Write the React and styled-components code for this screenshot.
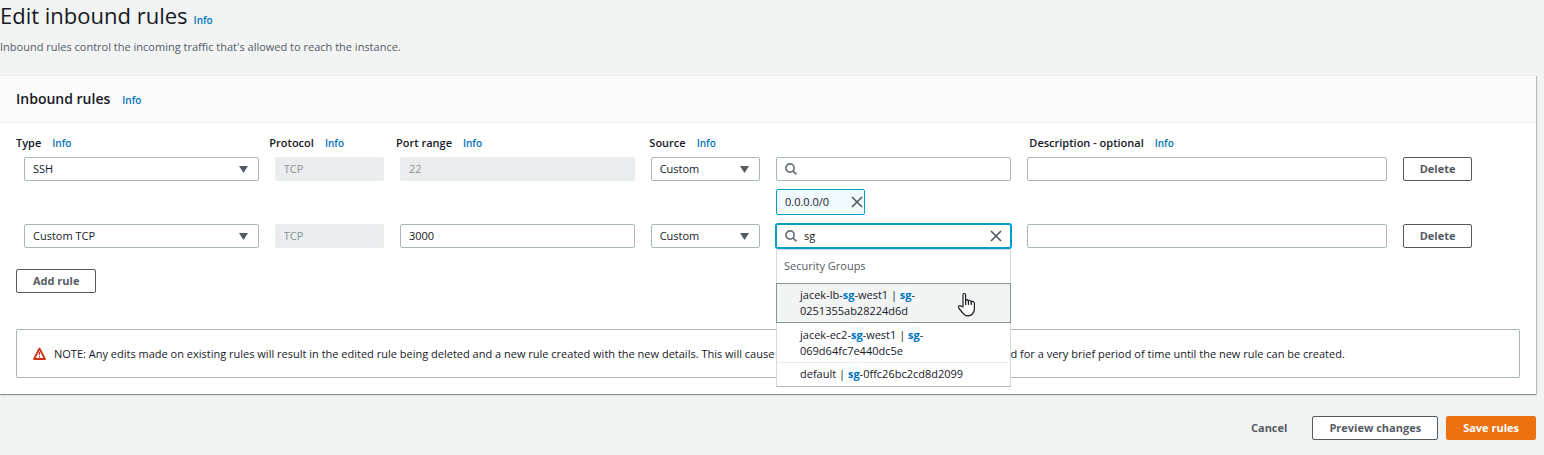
import React, { useState } from 'react';
import styled, { createGlobalStyle, css } from 'styled-components';

const GlobalStyle = createGlobalStyle`
  *, *::before, *::after { box-sizing: border-box; }
  body {
    margin: 0;
    background: #f2f3f3;
    color: #16191f;
    font-family: "Open Sans", "Noto Sans", sans-serif;
    font-size: 11px;
    line-height: 16px;
  }
  button, input, select { font: inherit; color: inherit; margin: 0; }
`;

const Page = styled.main`
  padding-right: 8px;
`;

const PageHeader = styled.header`
  padding-bottom: 20px;
`;

const TitleLine = styled.div`
  display: flex;
  align-items: baseline;
  gap: 6px;
`;

const PageTitle = styled.h1`
  margin: 0;
  font-size: 22px;
  line-height: 30px;
  font-weight: 400;
`;

const Intro = styled.p`
  margin: 9px 0 0;
  color: #545b64;
`;

const InfoLink = styled.a`
  color: #0073bb;
  font-size: 10px;
  font-weight: 600;
  text-decoration: none;
`;

const Panel = styled.section`
  background: #fff;
  border-top: 1px solid #eaeded;
  box-shadow: 0 1px 1px 0 rgba(0, 28, 36, 0.3), 1px 1px 1px 0 rgba(0, 28, 36, 0.2);
`;

const PanelHeader = styled.div`
  display: flex;
  align-items: baseline;
  gap: 12px;
  padding: 12px 16px;
  background: #fafafa;
  border-bottom: 1px solid #eaeded;
`;

const PanelTitle = styled.h2`
  margin: 0;
  font-size: 14px;
  line-height: 22px;
  font-weight: 600;
`;

const PanelBody = styled.div`
  padding: 12px 0 16px;
`;

const ColumnHeads = styled.div`
  display: grid;
  grid-template-columns: repeat(12, 1fr);
  padding-left: 16px;
  margin-bottom: 6px;
`;

const ColumnHead = styled.div`
  grid-column: span ${(p) => p.$span};
  display: flex;
  align-items: baseline;
  gap: 11px;
  font-weight: 600;
`;

const Rules = styled.div`
  display: flex;
  flex-direction: column;
  gap: 9px;
`;

const RuleRow = styled.div`
  display: grid;
  grid-template-columns: repeat(12, 1fr);
  column-gap: 16px;
  align-items: start;
  padding: 0 24px;
`;

const Cell = styled.div`
  grid-column: span ${(p) => p.$span};
  position: relative;
  min-width: 0;
`;

const controlBox = css`
  display: block;
  width: 100%;
  height: 24px;
  padding: 0 8px;
  border: 1px solid #aab7b8;
  border-radius: 2px;
  background: #fff;
  outline: none;
`;

const TextInput = styled.input`
  ${controlBox}
  padding-bottom: 2px;
  &:disabled {
    background: #eaeded;
    border-color: #eaeded;
    color: #879596;
  }
`;

const SelectInput = styled.select`
  ${controlBox}
  appearance: none;
`;

const Caret = styled.svg`
  position: absolute;
  top: 9px;
  right: 11px;
  width: 9px;
  height: 7px;
  fill: #545b64;
  pointer-events: none;
`;

const SearchBox = styled.div`
  display: flex;
  align-items: center;
  gap: 7px;
  height: 24px;
  padding: 0 8px;
  border: 1px solid ${(p) => (p.$active ? '#00a1c9' : '#aab7b8')};
  border-radius: 2px;
  background: #fff;
  box-shadow: ${(p) => (p.$active ? '0 0 0 1px #00a1c9' : 'none')};
`;

const SearchInput = styled.input`
  flex: 1;
  min-width: 0;
  height: 20px;
  padding: 0 0 2px;
  border: 0;
  outline: 0;
  background: transparent;
`;

const LineIcon = styled.svg`
  flex: none;
  display: block;
  width: 12px;
  height: 12px;
  fill: none;
  stroke: ${(p) => p.$color || '#545b64'};
  stroke-width: 1.700;
`;

const IconButton = styled.button`
  display: flex;
  padding: 0;
  border: 0;
  background: transparent;
  cursor: pointer;
`;

const Token = styled.div`
  display: inline-flex;
  vertical-align: top;
  align-items: center;
  gap: 22px;
  height: 26px;
  margin-top: 8px;
  padding: 0 1px 0 8px;
  border: 1px solid #00a1c9;
  border-radius: 2px;
  background: #f1faff;
`;

const Menu = styled.div`
  position: absolute;
  z-index: 2;
  top: 25px;
  left: 0;
  right: 0;
  background: #fff;
  border: 1px solid #d5dbdb;
  border-bottom-color: #aab7b8;
`;

const MenuHeading = styled.div`
  padding: 8px 7px 9px;
  color: #545b64;
`;

const MenuOption = styled.div`
  position: relative;
  padding: ${(p) => (p.$last ? '2px 8px 3px 23px' : '3px 72px 3px 23px')};
  margin: 0 -1px;
  border: 1px solid ${(p) => (p.$hovered ? '#879596' : 'transparent')};
  border-bottom-color: ${(p) => (p.$hovered ? '#879596' : p.$last ? 'transparent' : '#eaeded')};
  background: ${(p) => (p.$hovered ? '#f2f3f3' : 'transparent')};
  white-space: ${(p) => (p.$last ? 'nowrap' : 'normal')};
`;

const Match = styled.mark`
  background: #f1faff;
  color: #0073bb;
  font-weight: 700;
`;

const HandPointer = styled.svg`
  position: absolute;
  top: 8px;
  right: 34px;
  width: 19px;
  height: 25px;
`;

const Button = styled.button`
  height: 24px;
  padding: 0 16px;
  border: 1px solid ${(p) => (p.$kind === 'primary' ? '#ec7211' : p.$kind === 'link' ? 'transparent' : '#545b64')};
  border-radius: 2px;
  background: ${(p) => (p.$kind === 'primary' ? '#ec7211' : p.$kind === 'link' ? 'transparent' : '#fff')};
  color: ${(p) => (p.$kind === 'primary' ? '#fff' : '#545b64')};
  font-weight: 700;
  white-space: nowrap;
  cursor: pointer;
`;

const AddBar = styled.div`
  padding: 21px 16px 36px;
`;

const Note = styled.div`
  display: flex;
  align-items: center;
  gap: 8px;
  margin: 0 16px;
  padding: 16px;
  border: 1px solid #aab7b8;
  border-radius: 2px;
  line-height: 15px;
`;

const WarningIcon = styled.svg`
  flex: none;
  width: 13px;
  height: 13px;
  fill: none;
  stroke: #d13212;
  stroke-width: 1.800;
`;

const Actions = styled.footer`
  display: flex;
  justify-content: flex-end;
  gap: 8px;
  padding: 22px 0 15px;
`;

function Info() {
  return <InfoLink href="#info">Info</InfoLink>;
}

function Select({ label, options }) {
  return (
    <>
      <SelectInput aria-label={label} defaultValue={options[0]}>
        {options.map((o) => <option key={o}>{o}</option>)}
      </SelectInput>
      <Caret viewBox="0 0 9 7" aria-hidden="true"><path d="M0 0h9L4.500 7z" /></Caret>
    </>
  );
}

function SearchIcon() {
  return (
    <LineIcon viewBox="0 0 12 12" $color="#687078" aria-hidden="true">
      <circle cx="5" cy="5" r="4.100" />
      <path d="M7.900 7.900L11.400 11.400" />
    </LineIcon>
  );
}

function Clear({ label, onClick }) {
  return (
    <IconButton type="button" aria-label={label} onClick={onClick}>
      <LineIcon viewBox="0 0 12 12"><path d="M1 1l10 10M11 1L1 11" /></LineIcon>
    </IconButton>
  );
}

function Highlighted({ text }) {
  return text.split(/(sg)(-)/).map((part, i) => (
    part === 'sg' ? <Match key={i}>sg</Match> : <React.Fragment key={i}>{part}</React.Fragment>
  ));
}

const columns = [
  ['Type', 2],
  ['Protocol', 1],
  ['Port range', 2],
  ['Source', 3],
  ['Description - optional', 4],
];

const groups = [
  'jacek-lb-sg-west1 | sg-0251355ab28224d6d',
  'jacek-ec2-sg-west1 | sg-069d64fc7e440dc5e',
  'default | sg-0ffc26bc2cd8d2099',
];

function Rule({ name, types, port, portLocked, search, children }) {
  const [query, setQuery] = useState(search);
  return (
    <RuleRow>
      <Cell $span={2}><Select label={`${name} type`} options={types} /></Cell>
      <Cell $span={1}><TextInput aria-label={`${name} protocol`} defaultValue="TCP" disabled /></Cell>
      <Cell $span={2}><TextInput aria-label={`${name} port range`} defaultValue={port} disabled={portLocked} /></Cell>
      <Cell $span={1}><Select label={`${name} source`} options={['Custom', 'Anywhere', 'My IP']} /></Cell>
      <Cell $span={2}>
        <SearchBox $active={query !== ''}>
          <SearchIcon />
          <SearchInput aria-label={`${name} source search`} value={query} onChange={(e) => setQuery(e.target.value)} />
          {query !== '' && <Clear label="Clear search" onClick={() => setQuery('')} />}
        </SearchBox>
        {children}
      </Cell>
      <Cell $span={3}><TextInput aria-label={`${name} description`} /></Cell>
      <Cell $span={1}><Button type="button">Delete</Button></Cell>
    </RuleRow>
  );
}

export default function App() {
  return (
    <Page>
      <GlobalStyle />
      <PageHeader>
        <TitleLine>
          <PageTitle>Edit inbound rules</PageTitle>
          <Info />
        </TitleLine>
        <Intro>Inbound rules control the incoming traffic that's allowed to reach the instance.</Intro>
      </PageHeader>

      <Panel>
        <PanelHeader>
          <PanelTitle>Inbound rules</PanelTitle>
          <Info />
        </PanelHeader>
        <PanelBody>
          <ColumnHeads>
            {columns.map(([title, span]) => (
              <ColumnHead key={title} $span={span}>{title}<Info /></ColumnHead>
            ))}
          </ColumnHeads>
          <Rules>
            <Rule name="Rule 1" types={['SSH', 'Custom TCP']} port="22" portLocked search="">
              <Token>0.0.0.0/0<Clear label="Remove 0.0.0.0/0" /></Token>
            </Rule>
            <Rule name="Rule 2" types={['Custom TCP', 'SSH']} port="3000" search="sg">
              <Menu role="listbox" aria-label="Security Groups">
                <MenuHeading>Security Groups</MenuHeading>
                {groups.map((group, i) => (
                  <MenuOption
                    key={group}
                    role="option"
                    aria-selected={i === 0}
                    $hovered={i === 0}
                    $last={i === groups.length - 1}
                  >
                    <Highlighted text={group} />
                    {i === 0 && (
                      <HandPointer viewBox="0 0 19 25" aria-hidden="true">
                        <path
                          d="M6 15V3Q6 1.500 7.300 1.500T8.600 3v6q0-1.300 1.400-1.300T11.400 9.200v.600q0-1.300 1.400-1.300t1.400 1.400v.700q0-1.300 1.400-1.300T17.400 11.500v5q0 3.500-2 5.500-1.800 1.800-4.400 1.800-3.400 0-5.200-2.800L2 16.500Q1 14.800 2 14t2.300.2z"
                          fill="#fff"
                          stroke="#16191f"
                          strokeWidth="1.200"
                          strokeLinejoin="round"
                        />
                        <path d="M8.600 8v5M11.400 9v4M14.200 10v3" stroke="#16191f" strokeWidth="1.200" />
                      </HandPointer>
                    )}
                  </MenuOption>
                ))}
              </Menu>
            </Rule>
          </Rules>
          <AddBar><Button type="button">Add rule</Button></AddBar>
          <Note>
            <WarningIcon viewBox="0 0 13 13" aria-hidden="true">
              <path d="M6.500 1.500L12 12H1z" strokeLinejoin="round" />
              <path d="M6.500 5v3M6.500 9v1.500" strokeWidth="1.200" />
            </WarningIcon>
            <span>
              NOTE: Any edits made on existing rules will result in the edited rule being deleted and a new rule
              created with the new details. This will cause traffic that depends on that rule to be dropped for a
              very brief period of time until the new rule can be created.
            </span>
          </Note>
        </PanelBody>
      </Panel>

      <Actions>
        <Button type="button" $kind="link">Cancel</Button>
        <Button type="button">Preview changes</Button>
        <Button type="button" $kind="primary">Save rules</Button>
      </Actions>
    </Page>
  );
}
